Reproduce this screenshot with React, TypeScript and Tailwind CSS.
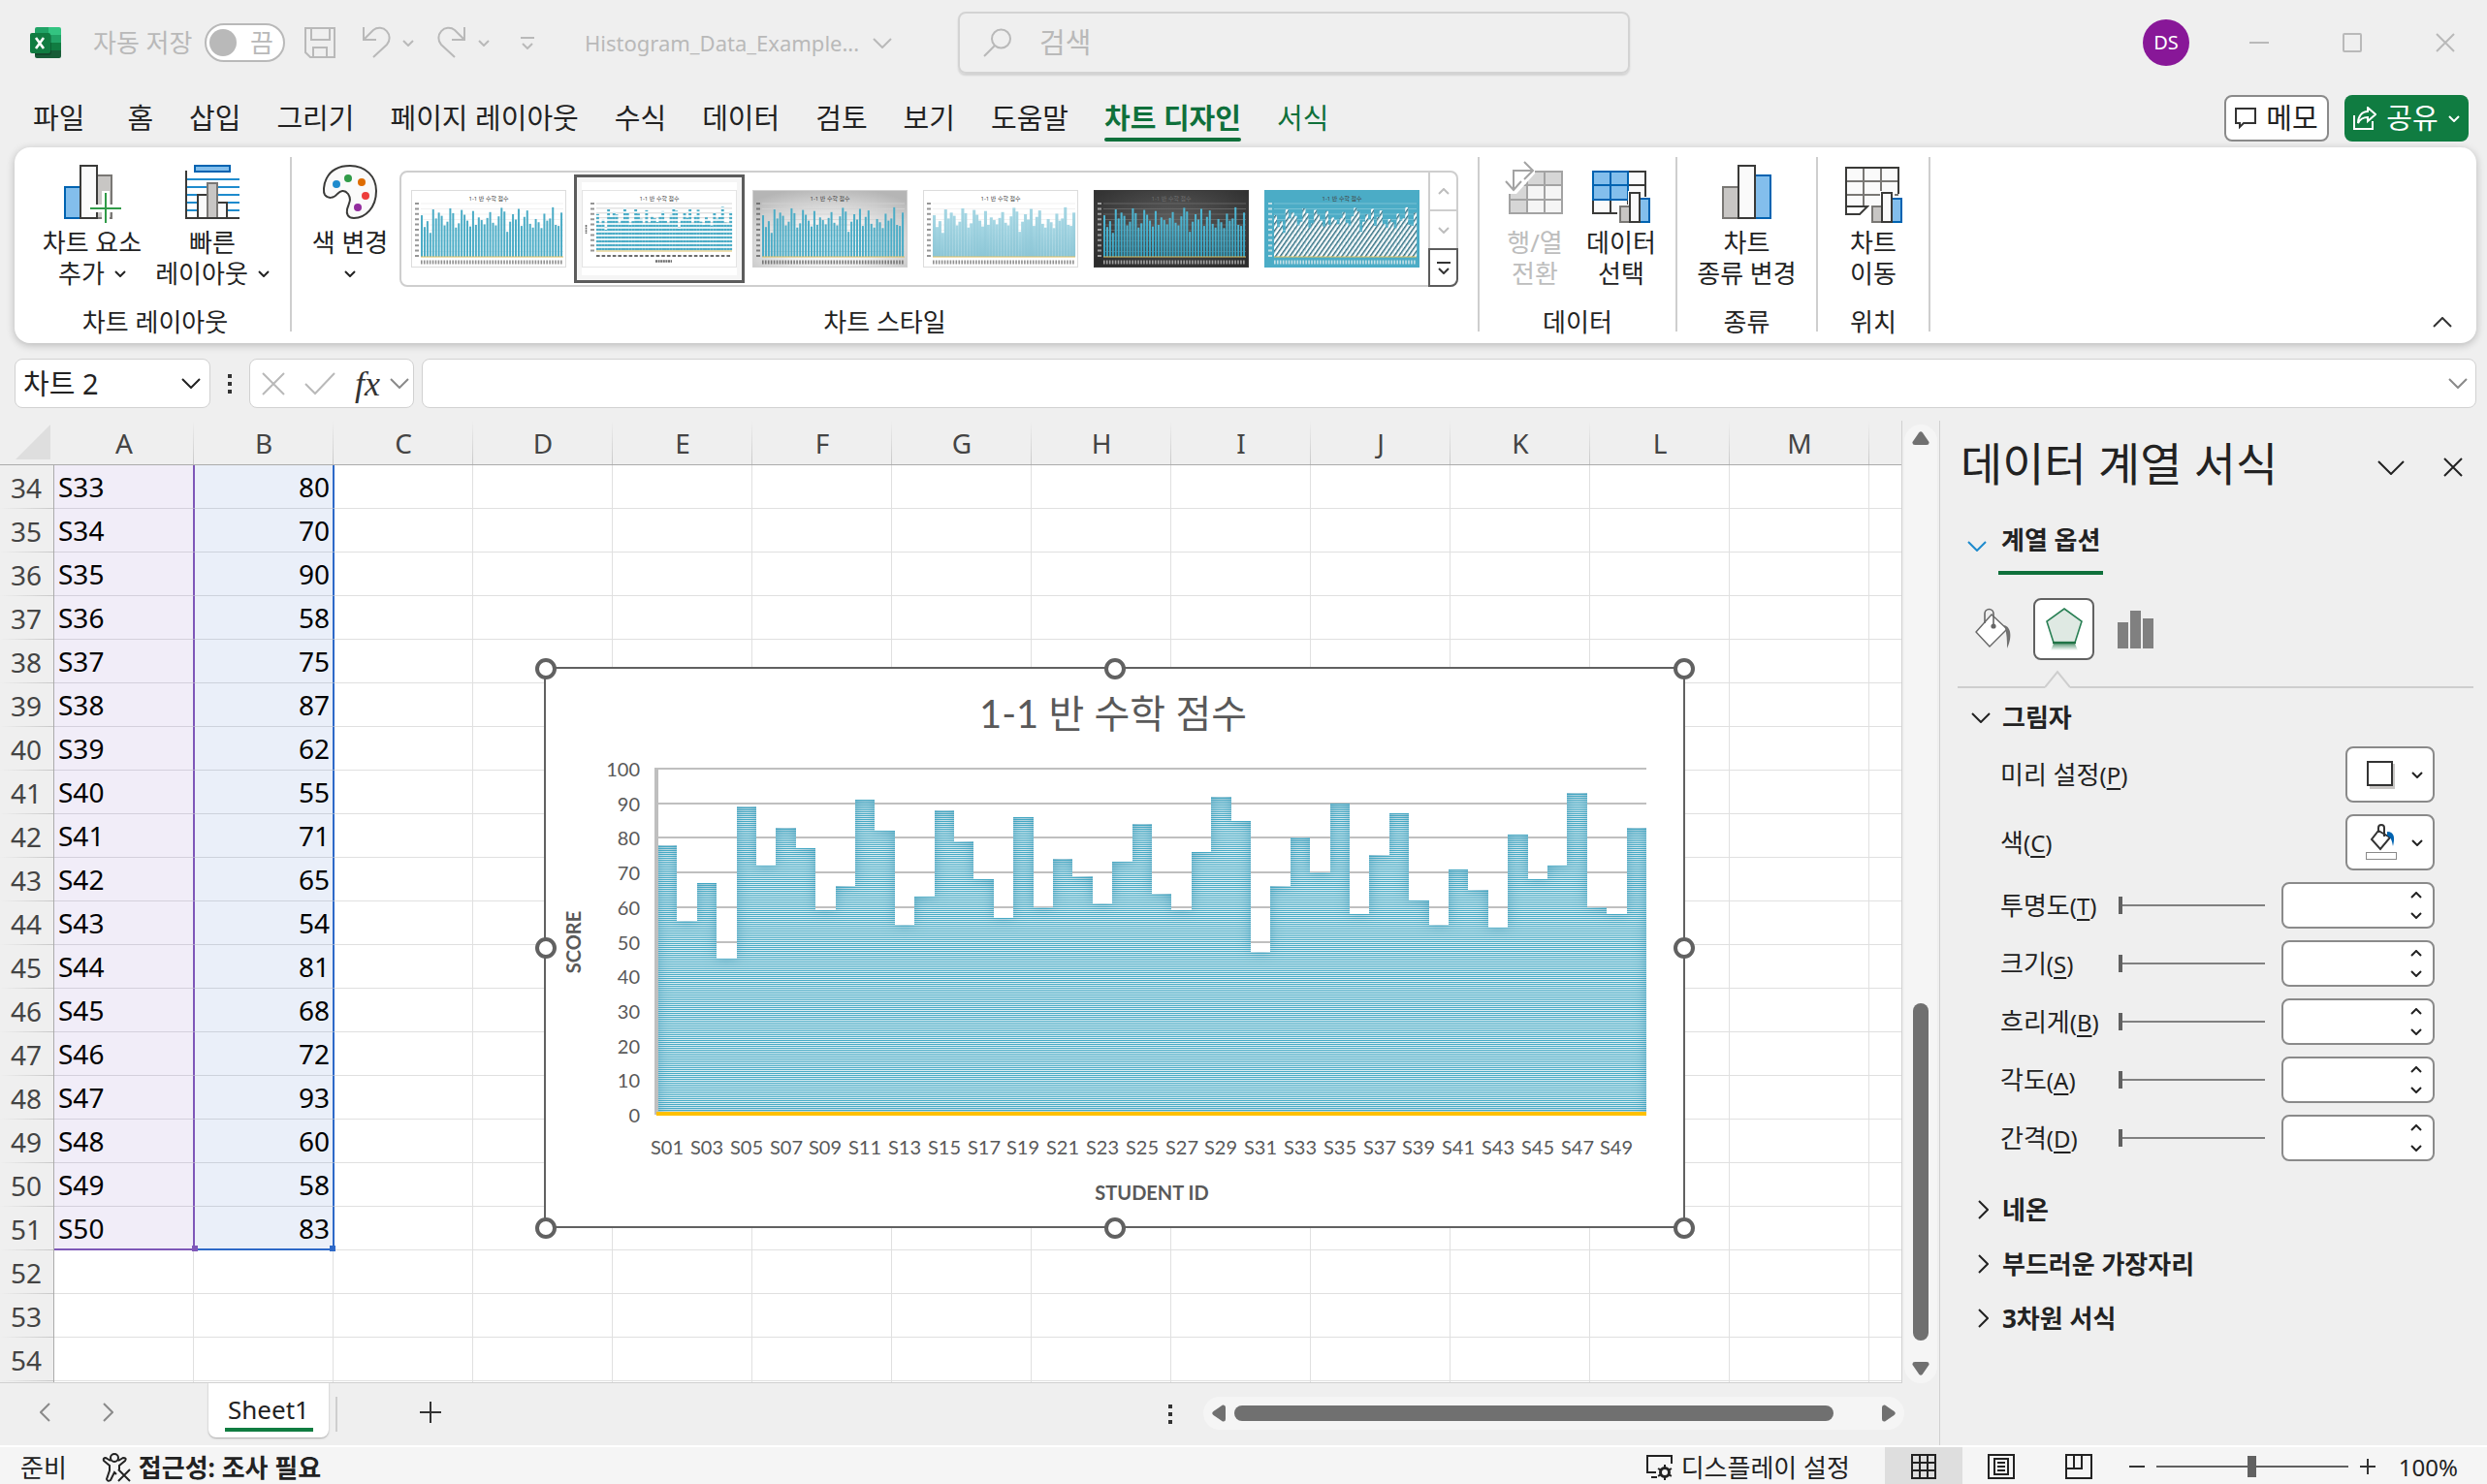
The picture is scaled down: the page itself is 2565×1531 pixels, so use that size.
import { Fragment, useState } from "react";
import type { ReactNode } from "react";

/* DATA */

const SCORES = [
  78, 56, 67, 45, 89, 72, 83, 77, 59, 66, 91, 82, 55, 63, 88, 79, 68, 57, 86, 60, 74, 69, 61, 73, 84,
  64, 59, 76, 92, 85, 47, 66, 80, 70, 90, 58, 75, 87, 62, 55, 71, 65, 54, 81, 68, 72, 93, 60, 58, 83,
];

const COLUMNS = ["A", "B", "C", "D", "E", "F", "G", "H", "I", "J", "K", "L", "M", ""];
const FIRST_ROW = 34;
const LAST_ROW = 54;
const LAST_FILLED_ROW = 51;

const TABS = ["홈", "삽입", "그리기", "페이지 레이아웃", "수식", "데이터", "검토", "보기", "도움말"];

const SHADOW_FIELDS = [
  { id: "transparency", label: "투명도", hotkey: "T" },
  { id: "size", label: "크기", hotkey: "S" },
  { id: "blur", label: "흐리게", hotkey: "B" },
  { id: "angle", label: "각도", hotkey: "A" },
  { id: "distance", label: "간격", hotkey: "D" },
];

function studentId(n: number) {
  return "S" + String(n).padStart(2, "0");
}

/* SMALL ICONS */

type ChevronProps = { size?: number; dir?: "down" | "up" | "left" | "right"; stroke?: number; className?: string };

function Chevron({ size = 12, dir = "down", stroke = 2, className = "" }: ChevronProps) {
  const half = size / 2;
  const points = {
    down: `1,1 ${half},${half} ${size - 1},1`,
    up: `1,${half} ${half},1 ${size - 1},${half}`,
    left: `${half},1 1,${half} ${half},${size - 1}`,
    right: `1,1 ${half},${half} 1,${size - 1}`,
  }[dir];
  const flat = dir === "down" || dir === "up";
  const w = flat ? size : half + 1;
  const h = flat ? half + 1 : size;

  return (
    <svg width={w} height={h} viewBox={`0 0 ${w} ${h}`} className={"shrink-0 " + className} aria-hidden="true">
      <polyline points={points} fill="none" stroke="currentColor" strokeWidth={stroke} />
    </svg>
  );
}

function ExcelLogo() {
  return (
    <svg width="32" height="32" viewBox="0 0 32 32" className="shrink-0" aria-label="Excel">
      <path d="M7 0H19V9H5V2a2 2 0 0 1 2-2z" fill="#21a366" />
      <path d="M19 0H30a2 2 0 0 1 2 2V9H19z" fill="#33c481" />
      <path d="M5 8H19V16H5z" fill="#107c41" />
      <path d="M19 8H32V16H19z" fill="#21a366" />
      <path d="M5 16H19V24H5z" fill="#185c37" />
      <path d="M19 16H32V24H19z" fill="#107c41" />
      <path d="M5 24H32V30a2 2 0 0 1-2 2H7a2 2 0 0 1-2-2z" fill="#185c37" />
      <path d="M5 7H19a3 3 0 0 1 3 3V26a3 3 0 0 1-3 3H5z" fill="#000" opacity="0.2" />
      <rect y="6" width="21" height="21" rx="2" fill="#107c41" />
      <path d="M6 11L14 22M14 11L6 22" stroke="#fff" strokeWidth="2.6" />
    </svg>
  );
}

function SaveIcon() {
  return (
    <svg width="32" height="32" viewBox="0 0 32 32" fill="none" stroke="currentColor" strokeWidth="2">
      <path d="M1 1H31V31H6L1 26z" />
      <path d="M7 1V13H26V1M9 31V21H23V31" />
    </svg>
  );
}

function UndoIcon() {
  return (
    <svg width="30" height="34" viewBox="0 0 30 34" fill="none" stroke="currentColor" strokeWidth="2">
      <path d="M2 1V14H15" />
      <path d="M2 14L12 4A10.300 10.300 0 0 1 26 19L12 32" />
    </svg>
  );
}

function RedoIcon() {
  return (
    <svg width="30" height="34" viewBox="0 0 30 34" fill="none" stroke="currentColor" strokeWidth="2">
      <path d="M28 1V14H15" />
      <path d="M28 14L18 4A10.300 10.300 0 0 0 4 19L18 32" />
    </svg>
  );
}

/* RIBBON ICONS */

function AddElementIcon() {
  return (
    <svg width="60" height="60" viewBox="0 0 60 60" strokeWidth="2">
      <rect x="2" y="23" width="16" height="32" fill="#83beec" stroke="#0063b1" />
      <rect x="34" y="11" width="16" height="44" fill="#c8c6c4" stroke="#797774" />
      <rect x="18" y="1" width="17" height="54" fill="#fafafa" stroke="#3a3a38" />
      <path d="M44 27V60M27 45H60" stroke="#fff" strokeWidth="8" />
      <path d="M44 29V60M28 45H60" stroke="#309b48" />
    </svg>
  );
}

function QuickLayoutIcon() {
  return (
    <svg width="60" height="60" viewBox="0 0 60 60" strokeWidth="2">
      <rect x="12" y="1" width="36" height="6" fill="#83beec" stroke="#0063b1" />
      <path d="M3 15H58M3 23H58M3 31H58M3 39H58M3 47H58" stroke="#1e8bcd" />
      <rect x="15" y="31" width="10" height="24" fill="#fafafa" stroke="#3a3a38" />
      <rect x="35" y="39" width="10" height="16" fill="#fafafa" stroke="#3a3a38" />
      <rect x="25" y="19" width="10" height="36" fill="#c8c6c4" stroke="#797774" />
      <path d="M3 6V55H58" fill="none" stroke="#3a3a38" />
    </svg>
  );
}

function PaletteIcon() {
  return (
    <svg width="60" height="60" viewBox="0 0 60 60">
      <path
        d="M30 1C46 1 57 12 57 27C57 44 46 55 34 55C28 55 26 51 27 46C29 39 32 36 28 30C24 25 20 27 17 30C13 35 7 35 4 31C1 26 3 1 30 1z"
        fill="#fafafa"
        stroke="#3a3a38"
        strokeWidth="2"
      />
      <circle cx="16" cy="20" r="4" fill="#1e8bcd" />
      <circle cx="28" cy="14" r="4" fill="#309b48" />
      <circle cx="42" cy="18" r="4" fill="#de6c00" />
      <circle cx="46" cy="32" r="4" fill="#ed3d3b" />
      <circle cx="38" cy="44" r="4" fill="#922c9e" />
    </svg>
  );
}

function SwapIcon() {
  return (
    <svg width="60" height="60" viewBox="0 0 60 60" fill="none" stroke="#a3a3a3" strokeWidth="2" className="overflow-visible">
      <rect x="4" y="7" width="54" height="43" fill="#f5f5f5" />
      <path d="M4 7H58V21H22V50H4z" fill="#d6d6d6" stroke="none" />
      <path d="M4 7H58V50H4zM22 7V50M40 7V50M4 21H58M4 36H58" />
      <path d="M-3 -6H30V9L11 30H-3z" fill="#fff" stroke="none" />
      <path d="M8 25V6H28M19 -3L28 6L19 15M0 17L8 26L16 17" />
    </svg>
  );
}

function SelectDataIcon() {
  return (
    <svg width="60" height="60" viewBox="0 0 60 60" strokeWidth="2">
      <path d="M1 7H55V50H1zM19 7V50M37 7V50M1 21H55M1 36H55" fill="#fafafa" stroke="#3a3a38" />
      <path d="M1 7H37V36H1zM19 7V36M1 21H37" fill="#83beec" stroke="#0063b1" />
      <path d="M26 41H37V27H52V33H60V60H26z" fill="#fff" />
      <rect x="29" y="43" width="10" height="16" fill="#c8c6c4" stroke="#797774" />
      <rect x="49" y="35" width="10" height="24" fill="#83beec" stroke="#0063b1" />
      <rect x="39" y="29" width="10" height="30" fill="#fafafa" stroke="#3a3a38" />
    </svg>
  );
}

function ChangeTypeIcon() {
  return (
    <svg width="60" height="60" viewBox="0 0 60 60" strokeWidth="2">
      <rect x="5" y="23" width="16" height="32" fill="#c8c6c4" stroke="#797774" />
      <rect x="38" y="11" width="16" height="44" fill="#83beec" stroke="#0063b1" />
      <rect x="21" y="1" width="17" height="54" fill="#fafafa" stroke="#3a3a38" />
    </svg>
  );
}

function MoveChartIcon() {
  return (
    <svg width="60" height="60" viewBox="0 0 60 60" strokeWidth="2">
      <path d="M2 3H56V43H2z" fill="#fafafa" />
      <path d="M20 3V43M38 3V43M2 17H56M2 31H56" stroke="#797774" />
      <path d="M56 30V3H2V51H16L24 43H2" fill="none" stroke="#3a3a38" />
      <path d="M26 41H37V27H52V33H60V60H26z" fill="#fff" />
      <rect x="29" y="43" width="10" height="16" fill="#c8c6c4" stroke="#797774" />
      <rect x="49" y="35" width="10" height="24" fill="#83beec" stroke="#0063b1" />
      <rect x="39" y="29" width="10" height="30" fill="#fafafa" stroke="#3a3a38" />
    </svg>
  );
}

/* CHART STYLE THUMBNAILS */

type ThumbStyle = {
  id: string;
  bg: string;
  bar: string;
  grid: string;
  ink: string;
  border: string;
  gap: number;
  axisTitles?: boolean;
};

const THUMBS: ThumbStyle[] = [
  { id: "s1", bg: "#ffffff", bar: "#4bacc6", grid: "#ececec", ink: "#6b6b6b", border: "#dcdcdc", gap: 1 },
  { id: "s2", bg: "#ffffff", bar: "url(#stripe)", grid: "#c9c9c9", ink: "#6b6b6b", border: "#e4e4e4", gap: 0, axisTitles: true },
  { id: "s3", bg: "url(#silver)", bar: "#4bacc6", grid: "#d2d2d2", ink: "#555555", border: "#d0d0d0", gap: 1 },
  { id: "s4", bg: "#ffffff", bar: "url(#fade)", grid: "#ececec", ink: "#6b6b6b", border: "#dcdcdc", gap: 0 },
  { id: "s5", bg: "url(#night)", bar: "url(#glow)", grid: "#6d6d6d", ink: "#c8c8c8", border: "#3a3a3a", gap: 1 },
  { id: "s6", bg: "#4bacc6", bar: "url(#hatch)", grid: "#84c7d9", ink: "#f2f2f2", border: "#4bacc6", gap: 0 },
];

function ThumbDefs() {
  return (
    <svg width="0" height="0" className="absolute" aria-hidden="true">
      <defs>
        <pattern id="stripe" width="4" height="4" patternUnits="userSpaceOnUse">
          <rect width="4" height="4" fill="#e2f2f6" />
          <rect width="4" height="2" fill="#4bacc6" />
        </pattern>
        <pattern id="hatch" width="4" height="4" patternUnits="userSpaceOnUse" patternTransform="rotate(35)">
          <rect width="4" height="4" fill="#ffffff" />
          <rect width="1.500" height="4" fill="#2f6d80" />
        </pattern>
        <radialGradient id="silver" cx="0.5" cy="0.7" r="0.75">
          <stop offset="0" stopColor="#ffffff" />
          <stop offset="0.4" stopColor="#f1f1f1" />
          <stop offset="1" stopColor="#b5b5b5" />
        </radialGradient>
        <radialGradient id="night" cx="0.5" cy="0.4" r="0.7">
          <stop offset="0" stopColor="#5c5c5c" />
          <stop offset="1" stopColor="#2c2c2c" />
        </radialGradient>
        <linearGradient id="fade" x1="0" y1="0" x2="0" y2="1">
          <stop offset="0" stopColor="#a5d6e3" />
          <stop offset="1" stopColor="#8cc6d6" />
        </linearGradient>
        <linearGradient id="glow" x1="0" y1="0" x2="0" y2="1">
          <stop offset="0" stopColor="#4fb9d6" />
          <stop offset="1" stopColor="#37a0be" />
        </linearGradient>
      </defs>
    </svg>
  );
}

function Thumb({ style }: { style: ThumbStyle }) {
  const left = style.axisTitles ? 15 : 10;
  const right = style.axisTitles ? 155 : 157;
  const bottom = style.axisTitles ? 63 : 69;
  const top = 14;
  const step = (right - left) / SCORES.length;
  const unit = (bottom - top) / 100;

  return (
    <svg width="160" height="80" viewBox="0 0 160 80" aria-hidden="true">
      <rect x="0.500" y="0.500" width="159" height="79" fill={style.bg} stroke={style.border} />
      <text x="80" y="11" textAnchor="middle" fontSize="6" fill={style.id === "s5" ? "#707070" : "#444444"}>
        1-1 반 수학 점수
      </text>
      {[0, 1, 2, 3, 4, 5, 6, 7, 8, 9].map((k) => (
        <path key={k} d={`M${left} ${top + (k * (bottom - top)) / 10}H${right}`} stroke={style.grid} strokeWidth="0.800" />
      ))}
      <path d={`M${left - 4} ${top - 1}V${bottom + 1}`} stroke={style.ink} strokeWidth="4" strokeDasharray="2 3.400" opacity="0.700" />
      {SCORES.map((s, i) => (
        <rect
          key={i}
          x={left + i * step}
          y={bottom - s * unit}
          width={style.gap ? step * 0.68 : step + 0.1}
          height={s * unit}
          fill={style.bar}
        />
      ))}
      <path d={`M${left} ${bottom}H${right}`} stroke="#e0c060" />
      {style.axisTitles ? (
        <g stroke={style.ink}>
          <path d={`M${left} 68H${right}`} strokeWidth="2" strokeDasharray="3.600 2" />
          <path d="M76 73.500H93" strokeWidth="2.400" strokeDasharray="2 0.600" />
          <path d="M4.500 36V45" strokeWidth="1.600" strokeDasharray="2 0.600" />
        </g>
      ) : (
        <path d={`M${left} 74.500H${right}`} stroke={style.ink} strokeWidth="4" strokeDasharray="1.600 1.340" opacity="0.750" />
      )}
    </svg>
  );
}

/* RIBBON */

function RibbonButton({
  icon,
  line1,
  line2,
  chevron,
  className,
  disabled,
}: {
  icon: ReactNode;
  line1: string;
  line2?: string;
  chevron?: boolean;
  className: string;
  disabled?: boolean;
}) {
  return (
    <button
      disabled={disabled}
      className={"flex flex-col items-center text-[26px] leading-8 whitespace-nowrap disabled:text-[#bdbdbd] " + className}
    >
      <span className="mb-1">{icon}</span>
      <span>{line1}</span>
      <span className="flex h-8 items-center gap-2.5">
        {line2}
        {chevron && <Chevron />}
      </span>
    </button>
  );
}

function RibbonGroup({ label, className, children }: { label: string; className: string; children: ReactNode }) {
  return (
    <>
      <section className={"flex shrink-0 flex-col " + className}>
        <div className="flex h-[164px] items-start pt-[18px]">{children}</div>
        <h2 className="text-center text-[26px] leading-8">{label}</h2>
      </section>
      <div className="mt-2.5 h-[180px] w-[2px] shrink-0 bg-[#cecece]" />
    </>
  );
}

function Ribbon() {
  const [selected, setSelected] = useState("s2");

  return (
    <div className="mr-[11px] ml-[15px] flex h-[202px] rounded-2xl bg-white shadow-[0_2px_8px_rgba(0,0,0,0.24)]">
      <RibbonGroup label="차트 레이아웃" className="w-[284px] pl-1.5">
        <div className="flex pl-3">
          <RibbonButton className="w-[124px]" icon={<AddElementIcon />} line1="차트 요소" line2="추가" chevron />
          <RibbonButton className="w-[124px]" icon={<QuickLayoutIcon />} line1="빠른" line2="레이아웃" chevron />
        </div>
      </RibbonGroup>

      <RibbonGroup label="차트 스타일" className="w-[1223px]">
        <RibbonButton className="ml-4 w-[88px]" icon={<PaletteIcon />} line1="색 변경" chevron />
        <ThumbDefs />
        <div className="mt-[6px] ml-[7px] flex h-[120px] rounded-lg border-2 border-[#cecece]">
          <div className="flex w-[1059px] items-center pl-[2px]">
            {THUMBS.map((t) => (
              <button
                key={t.id}
                aria-label={"스타일 " + t.id}
                onClick={() => setSelected(t.id)}
                className={
                  "flex h-[112px] w-[176px] shrink-0 items-center justify-center border-[3px] " +
                  (selected === t.id ? "border-[#5c5c5c] bg-[#f5f5f5]" : "border-transparent")
                }
              >
                <span className={"py-2 " + (selected === t.id ? "bg-white" : "")}>
                  <Thumb style={t} />
                </span>
              </button>
            ))}
          </div>
          <div className="flex w-[29px] flex-col border-l-2 border-[#cecece] text-[#bdbdbd]">
            <button aria-label="위로" className="flex flex-1 items-center justify-center border-b-2 border-[#cecece]">
              <Chevron dir="up" />
            </button>
            <button aria-label="아래로" className="flex flex-1 items-center justify-center">
              <Chevron />
            </button>
            <button
              aria-label="자세히"
              className="-mr-[2px] -mb-[2px] -ml-[2px] flex h-[40px] flex-col items-center justify-center gap-1 rounded-br-lg border-2 border-[#5c5c5c] text-[#333333]"
            >
              <span className="h-[2px] w-3.5 bg-[#333333]" />
              <Chevron />
            </button>
          </div>
        </div>
      </RibbonGroup>

      <RibbonGroup label="데이터" className="w-[202px]">
        <RibbonButton className="ml-3 w-[90px]" icon={<SwapIcon />} line1="행/열" line2="전환" disabled />
        <RibbonButton className="w-[88px]" icon={<SelectDataIcon />} line1="데이터" line2="선택" />
      </RibbonGroup>

      <RibbonGroup label="종류" className="w-[143px]">
        <RibbonButton className="w-full" icon={<ChangeTypeIcon />} line1="차트" line2="종류 변경" />
      </RibbonGroup>

      <RibbonGroup label="위치" className="w-[114px]">
        <RibbonButton className="w-full" icon={<MoveChartIcon />} line1="차트" line2="이동" />
      </RibbonGroup>

      <button aria-label="리본 축소" className="mt-auto mr-[25px] mb-4 ml-auto text-[#333333]">
        <Chevron dir="up" size={20} />
      </button>
    </div>
  );
}

/* TITLE BAR + TABS */

function TitleBar() {
  const [autoSave, setAutoSave] = useState(false);

  return (
    <header className="flex h-[88px] items-center pr-[33px] pl-[31px] text-[26px] text-[#b9b9b9]">
      <div className="flex w-[957px] items-center">
        <ExcelLogo />
        <span className="ml-[33px] w-[115px] whitespace-nowrap">자동 저장</span>
        <button
          role="switch"
          aria-checked={autoSave}
          aria-label="자동 저장"
          onClick={() => setAutoSave(!autoSave)}
          className="flex h-10 w-[83px] items-center justify-between rounded-full border-2 border-[#b9b9b9] bg-white pr-2.5 pl-[3px]"
        >
          <span className="size-7 rounded-full bg-[#b9b9b9]" />
          <span>끔</span>
        </button>
        <button aria-label="저장" className="ml-5">
          <SaveIcon />
        </button>
        <button aria-label="실행 취소" className="ml-[27px] flex items-center gap-3">
          <UndoIcon />
          <Chevron />
        </button>
        <button aria-label="다시 실행" className="ml-6 flex items-center gap-3">
          <RedoIcon />
          <Chevron />
        </button>
        <button aria-label="빠른 실행 도구 모음" className="ml-8 flex flex-col items-center gap-1">
          <span className="h-[2px] w-3.5 bg-[#b9b9b9]" />
          <Chevron />
        </button>
        <button className="ml-[52px] flex items-center gap-3.5 text-[22px]">
          Histogram_Data_Example...
          <Chevron size={20} />
        </button>
      </div>

      <label className="flex h-16 w-[693px] items-center gap-7 rounded-lg border-2 border-[#d3d3d3] px-6 shadow-[0_2px_2px_rgba(0,0,0,0.12)]">
        <svg width="30" height="30" viewBox="0 0 30 30" fill="none" stroke="currentColor" strokeWidth="2">
          <circle cx="18.500" cy="11" r="9.500" />
          <path d="M12 18L1 29" />
        </svg>
        <input
          aria-label="검색"
          placeholder="검색"
          className="min-w-0 flex-1 bg-transparent text-[29px] outline-none placeholder:text-[#b9b9b9]"
        />
      </label>

      <div className="ml-auto flex items-center">
        <button className="mr-[62px] flex size-12 items-center justify-center rounded-full bg-[#881798] text-[20px] text-white">
          DS
        </button>
        <button aria-label="최소화" className="mr-[76px] h-[2px] w-5 bg-[#b9b9b9]" />
        <button aria-label="최대화" className="mr-[76px] size-5 rounded-xs border-2 border-[#b9b9b9]" />
        <button aria-label="닫기">
          <svg width="20" height="20" viewBox="0 0 20 20" stroke="currentColor" strokeWidth="2">
            <path d="M1 1L19 19M19 1L1 19" />
          </svg>
        </button>
      </div>
    </header>
  );
}

function TabBar() {
  return (
    <nav className="flex h-16 items-center pt-1 pr-[19px] pl-[34px] text-[29px] leading-9 whitespace-nowrap">
      <button className="mr-11">파일</button>
      <div className="flex items-center gap-[37px]">
        {TABS.map((t) => (
          <button key={t}>{t}</button>
        ))}
        <button className="relative font-bold text-[#0f703b]">
          차트 디자인
          <span className="absolute -bottom-1.5 left-0 h-1 w-full rounded-full bg-[#0f703b]" />
        </button>
        <button className="text-[#0f703b]">서식</button>
      </div>
      <button className="ml-auto flex h-12 w-[108px] items-center justify-center gap-2.5 rounded-lg border-2 border-[#8a8a8a] bg-white">
        <svg width="22" height="22" viewBox="0 0 22 22" fill="none" stroke="#333333" strokeWidth="2">
          <path d="M1 1H21V16H9L5 20V16H1z" />
        </svg>
        메모
      </button>
      <button className="ml-4 flex h-12 w-32 items-center justify-center gap-2.5 rounded-lg bg-[#107c41] text-white">
        <svg width="24" height="24" viewBox="0 0 24 24" fill="none" stroke="currentColor" strokeWidth="2">
          <path d="M1 9V23H20V15" />
          <path d="M15 1L23 8L15 15V11C10 11 7 13 5 17C5 10 9 5 15 5z" />
        </svg>
        공유
        <Chevron />
      </button>
    </nav>
  );
}

/* FORMULA BAR */

function FormulaBar() {
  return (
    <div className="mt-4 flex h-[51px] items-stretch pr-[11px] pl-[15px]">
      <div className="flex w-[202px] items-center rounded-lg border border-[#d1d1d1] bg-white pr-[9px] pl-2">
        <input aria-label="이름 상자" defaultValue="차트 2" className="min-w-0 flex-1 bg-transparent text-[29px] leading-9 outline-none" />
        <button aria-label="이름 목록">
          <Chevron size={20} />
        </button>
      </div>
      <div className="flex w-10 flex-col items-center justify-center gap-1">
        <span className="size-1 bg-[#333333]" />
        <span className="size-1 bg-[#333333]" />
        <span className="size-1 bg-[#333333]" />
      </div>
      <div className="flex w-[170px] items-center rounded-lg border border-[#d1d1d1] bg-white pr-1 pl-3 text-[#b9b9b9]">
        <button aria-label="취소">
          <svg width="24" height="24" viewBox="0 0 24 24" stroke="currentColor" strokeWidth="2">
            <path d="M1 1L23 23M23 1L1 23" />
          </svg>
        </button>
        <button aria-label="입력" className="ml-5">
          <svg width="32" height="24" viewBox="0 0 32 24" fill="none" stroke="currentColor" strokeWidth="2">
            <path d="M1 12L11 22L31 1" />
          </svg>
        </button>
        <button
          aria-label="함수 삽입"
          className="ml-5 font-['Liberation_Serif',serif] text-[36px] leading-9 text-[#333333] italic"
        >
          fx
        </button>
        <Chevron size={20} className="ml-auto text-[#8a8a8a]" />
      </div>
      <div className="ml-2 flex flex-1 items-center rounded-lg border border-[#d1d1d1] bg-white pr-2 pl-3">
        <input aria-label="수식 입력줄" className="min-w-0 flex-1 bg-transparent text-[29px] outline-none" />
        <Chevron size={20} className="text-[#8a8a8a]" />
      </div>
    </div>
  );
}

/* CHART OBJECT */

const PLOT = { left: 116, right: 1136, top: 104, bottom: 461 };

function ScoreChart() {
  const step = (PLOT.right - PLOT.left) / SCORES.length;
  const unit = (PLOT.bottom - PLOT.top) / 100;
  const area =
    `M${PLOT.left} ${PLOT.bottom}` +
    SCORES.map((s, i) => `V${Math.round(PLOT.bottom - s * unit)}H${Math.round(PLOT.left + (i + 1) * step)}`).join("") +
    `V${PLOT.bottom}z`;

  return (
    <svg width="1197" height="600" viewBox="-11 -11 1197 600" role="img" aria-label="1-1 반 수학 점수">
      <defs>
        <pattern id="bars" width="2" height="2" patternUnits="userSpaceOnUse">
          <rect width="2" height="2" fill="#dbeef3" />
          <rect width="2" height="1" fill="#4bacc6" />
        </pattern>
        <filter id="inner" x="-2%" y="-5%" width="104%" height="110%">
          <feComponentTransfer in="SourceAlpha" result="inverse">
            <feFuncA type="table" tableValues="1 0" />
          </feComponentTransfer>
          <feGaussianBlur in="inverse" stdDeviation="7" result="soft" />
          <feFlood floodColor="#3fa3bf" floodOpacity="1" />
          <feComposite in2="soft" operator="in" />
          <feComposite in2="SourceAlpha" operator="in" result="shade" />
          <feMerge>
            <feMergeNode in="SourceGraphic" />
            <feMergeNode in="shade" />
          </feMerge>
        </filter>
      </defs>

      <rect x="0" y="0" width="1175" height="577" fill="#ffffff" stroke="#616161" strokeWidth="2" />
      <text x="586" y="62" textAnchor="middle" fontSize="40" fill="#595959" className="font-['Lato','Noto_Sans_CJK_KR',sans-serif]">
        1-1 반 수학 점수
      </text>

      {[0, 1, 2, 3, 4, 5, 6, 7, 8, 9, 10].map((k) => {
        const y = Math.round(PLOT.bottom - k * 10 * unit);
        return (
          <Fragment key={k}>
            <path d={`M${PLOT.left} ${y}H${PLOT.right}`} stroke="#bfbfbf" strokeWidth="2" />
            <text x="98" y={y + 8} textAnchor="end" fontSize="20" fill="#595959" className="font-['Lato',sans-serif]">
              {k * 10}
            </text>
          </Fragment>
        );
      })}

      <path d={area} fill="url(#bars)" filter="url(#inner)" />
      <path d={`M${PLOT.left - 1} ${PLOT.top - 1}V${PLOT.bottom}`} stroke="#bfbfbf" strokeWidth="4" />
      <path d={`M${PLOT.left - 1} ${PLOT.bottom - 1}H${PLOT.right}`} stroke="#ffc000" strokeWidth="4" />

      <g textAnchor="middle" fontSize="20" fill="#595959" className="font-['Lato',sans-serif]">
        {SCORES.map((_, i) =>
          i % 2 === 0 ? (
            <text key={i} x={Math.round(PLOT.left + (i + 0.5) * step)} y="502">
              {studentId(i + 1)}
            </text>
          ) : null,
        )}
        <text x="626" y="549" fontWeight="bold">
          STUDENT ID
        </text>
        <text transform="translate(37 283) rotate(-90)" fontWeight="bold">
          SCORE
        </text>
      </g>

      <g fill="#ffffff" stroke="#616161" strokeWidth="4">
        {[1, 588, 1175].map((x) =>
          [1, 289, 578].map((y) => (x === 588 && y === 289 ? null : <circle key={x + "-" + y} cx={x} cy={y} r="9" />)),
        )}
      </g>
    </svg>
  );
}

/* SHEET */

function cellClass(row: number, col: string) {
  const last = row === LAST_FILLED_ROW;
  if (row > LAST_FILLED_ROW) return "border-r border-b border-[#e0e0e0] p-0";
  if (col === "A") {
    return (
      "border-r border-r-[#7e57b8] bg-[#f1edf8] p-0 pl-1 " +
      (last ? "border-b-2 border-b-[#7e57b8]" : "border-b border-b-[#d4d0dc]")
    );
  }
  if (col === "B") {
    return (
      "relative border-x border-l-[#7e57b8] border-r-[#2e69c8] bg-[#eaeff9] p-0 pr-[3px] text-right " +
      (last ? "border-b-2 border-b-[#2e69c8]" : "border-b border-b-[#cdd2dc]")
    );
  }
  if (col === "C") return "border-x border-b border-[#e0e0e0] border-l-[#2e69c8] p-0";
  return "border-r border-b border-[#e0e0e0] p-0";
}

function cellValue(row: number, col: string) {
  if (row > LAST_FILLED_ROW) return null;
  if (col === "A") return studentId(row - 1);
  if (col === "B") return SCORES[row - 2];
  return null;
}

function Sheet() {
  const rows = Array.from({ length: LAST_ROW - FIRST_ROW + 2 }, (_, i) => FIRST_ROW + i);

  return (
    <div className="relative min-h-0 min-w-0 flex-1 overflow-hidden border-r border-b border-[#d0d0d0] bg-white">
      <table className="w-[2072px] table-fixed border-separate border-spacing-0 text-[28px] leading-10 text-black">
        <colgroup>
          <col className="w-14" />
          {COLUMNS.map((c) => (
            <col key={c} className="w-36" />
          ))}
        </colgroup>
        <thead>
          <tr className="h-[46px] bg-[#efefef] text-[#444444]">
            <th className="border-b border-[#ababab] p-0 pb-1 align-bottom">
              <svg width="38" height="38" viewBox="0 0 38 38" className="mr-[3px] ml-auto" aria-label="모두 선택">
                <path d="M37 1V37H1z" fill="#dedede" />
              </svg>
            </th>
            {COLUMNS.map((c) => (
              <th key={c} className="relative border-b border-[#ababab] p-0 font-normal">
                {c}
                <span className="absolute right-0 bottom-0 h-full w-px bg-linear-to-b from-transparent to-[#c8c8c8]" />
              </th>
            ))}
          </tr>
        </thead>
        <tbody>
          {rows.map((r) => (
            <tr key={r} className="h-[45px]">
              <th className="relative border-r border-[#ababab] bg-[#efefef] p-0 pr-3 text-right font-normal text-[#444444]">
                {r <= LAST_ROW && r}
                <span className="absolute bottom-0 left-0 h-px w-full bg-linear-to-r from-transparent to-[#c8c8c8]" />
              </th>
              {COLUMNS.map((c) => (
                <td key={c} className={cellClass(r, c)}>
                  {cellValue(r, c)}
                  {r === LAST_FILLED_ROW && c === "B" && (
                    <>
                      <span className="absolute -bottom-[3px] -left-[3px] size-[6px] bg-[#7e57b8]" />
                      <span className="absolute -right-[3px] -bottom-[3px] size-[6px] bg-[#2e69c8]" />
                    </>
                  )}
                </td>
              ))}
            </tr>
          ))}
        </tbody>
      </table>

      <div className="absolute top-[244px] left-[551px]">
        <ScoreChart />
      </div>
    </div>
  );
}

function VerticalScroll() {
  return (
    <div className="mt-1 mr-[2px] ml-[2px] flex w-[34px] flex-col items-center rounded-full bg-[#f5f5f5] pt-[7px] pb-2">
      <button aria-label="위로 스크롤">
        <svg width="18" height="14" viewBox="0 0 18 14" fill="#707070">
          <path d="M7 1.500Q9 -1 11 1.500L17.500 11Q18 14 15 14H3Q0 14 0.500 11z" />
        </svg>
      </button>
      <div className="flex w-4 flex-1 flex-col pt-[576px] pb-[22px]">
        <div className="flex-1 rounded-full bg-[#707070]" />
      </div>
      <button aria-label="아래로 스크롤">
        <svg width="18" height="14" viewBox="0 0 18 14" fill="#707070">
          <path d="M7 12.500Q9 15 11 12.500L17.500 3Q18 0 15 0H3Q0 0 0.500 3z" />
        </svg>
      </button>
    </div>
  );
}

function SheetTabs() {
  return (
    <div className="flex h-16 shrink-0 items-start pr-[36px]">
      <button aria-label="이전 시트" className="mt-5 ml-[41px] text-[#8a8a8a]">
        <Chevron dir="left" size={20} />
      </button>
      <button aria-label="다음 시트" className="mt-5 ml-[54px] text-[#8a8a8a]">
        <Chevron dir="right" size={20} />
      </button>
      <button className="-mt-px ml-[98px] flex h-[57px] w-[124px] flex-col items-center rounded-b-lg bg-white pt-2 text-[26px] leading-10 shadow-[0_1px_2px_rgba(0,0,0,0.3)]">
        Sheet1
        <span className="-mt-px h-1 w-[91px] bg-[#107c41]" />
      </button>
      <span className="mt-3.5 ml-[7px] h-9 w-[2px] bg-[#cecece]" />
      <button aria-label="새 시트" className="mt-[19px] ml-[85px]">
        <svg width="22" height="22" viewBox="0 0 22 22" stroke="#333333" strokeWidth="2">
          <path d="M11 0V22M0 11H22" />
        </svg>
      </button>
      <div className="mt-[22px] ml-auto flex flex-col gap-1">
        <span className="size-1 bg-[#333333]" />
        <span className="size-1 bg-[#333333]" />
        <span className="size-1 bg-[#333333]" />
      </div>
      <div className="mt-3.5 ml-8 flex h-[34px] w-[723px] items-center rounded-full bg-[#f5f5f5] px-[9px]">
        <button aria-label="왼쪽으로 스크롤">
          <svg width="14" height="18" viewBox="0 0 14 18" fill="#707070">
            <path d="M1.500 7Q-1 9 1.500 11L11 17.500Q14 18 14 15V3Q14 0 11 0.500z" />
          </svg>
        </button>
        <div className="ml-[9px] h-4 w-[618px] rounded-full bg-[#707070]" />
        <button aria-label="오른쪽으로 스크롤" className="ml-auto">
          <svg width="14" height="18" viewBox="0 0 14 18" fill="#707070">
            <path d="M12.500 7Q15 9 12.500 11L3 17.500Q0 18 0 15V3Q0 0 3 0.500z" />
          </svg>
        </button>
      </div>
    </div>
  );
}

/* FORMAT PANE */

function Hotkey({ letter }: { letter: string }) {
  return (
    <span className="text-[24px]">
      (<u className="underline-offset-4">{letter}</u>)
    </span>
  );
}

function FormatPane() {
  return (
    <aside className="flex w-[565px] shrink-0 flex-col border-l border-[#d0d0d0] text-[26px] leading-8">
      <div className="flex items-center pt-3.5 pr-[25px] pl-[21px]">
        <h1 className="text-[47px] leading-[60px] whitespace-nowrap">데이터 계열 서식</h1>
        <button aria-label="작업창 옵션" className="mt-2 ml-auto">
          <Chevron size={28} />
        </button>
        <button aria-label="닫기" className="mt-2 ml-10">
          <svg width="20" height="20" viewBox="0 0 20 20" stroke="#222222" strokeWidth="2">
            <path d="M1 1L19 19M19 1L1 19" />
          </svg>
        </button>
      </div>

      <button className="mt-[33px] flex items-start pl-7 font-bold">
        <Chevron size={20} className="mt-[17px] mr-3 text-[#1e8bcd]" />
        <span className="border-b-4 border-[#0f703b] px-[3px] pb-4">계열 옵션</span>
      </button>

      <div className="mt-6 flex items-center pl-[36px]">
        <button aria-label="채우기 및 선">
          <svg width="38" height="44" viewBox="0 0 38 44" fill="none" stroke="#666666">
            <path d="M17 7L33 22L15 40L1 25z" fill="#ffffff" strokeWidth="1.400" />
            <path d="M10 16V6a4.500 4.500 0 0 1 9 0V18" strokeWidth="1.600" />
            <circle cx="19" cy="19" r="2.600" fill="#666666" stroke="none" />
            <path d="M30 18C38 20 38 32 33 42C33 34 33 26 30 18z" fill="#707070" stroke="none" />
          </svg>
        </button>
        <button
          aria-label="효과"
          className="ml-[22px] flex h-16 w-[63px] items-center justify-center rounded-lg border-2 border-[#616161] bg-white"
        >
          <svg width="40" height="46" viewBox="0 0 40 46">
            <defs>
              <linearGradient id="mirror" x1="0" y1="0" x2="0" y2="1">
                <stop offset="0" stopColor="#217346" stopOpacity="0.700" />
                <stop offset="1" stopColor="#217346" stopOpacity="0" />
              </linearGradient>
            </defs>
            <path d="M9 38H31L34 45H6z" fill="url(#mirror)" />
            <path d="M20 2L38 15L31 37H9L2 15z" fill="#dfe9e3" stroke="#2a8055" strokeWidth="1.600" />
            <path d="M8 37H32" stroke="#217346" strokeWidth="2.400" />
          </svg>
        </button>
        <button aria-label="계열 옵션" className="ml-6">
          <svg width="38" height="40" viewBox="0 0 38 40" fill="#808080">
            <path d="M0 13H11V40H0zM13 1H24V40H13zM26 9H37V40H26z" />
          </svg>
        </button>
      </div>

      <div className="mt-2.5 mr-3.5 ml-[18px] flex items-end">
        <span className="h-[2px] w-[90px] bg-[#cecece]" />
        <svg width="26" height="19" viewBox="0 0 26 19" fill="none" stroke="#cecece" strokeWidth="2">
          <path d="M0 18L13 2L26 18" />
        </svg>
        <span className="h-[2px] flex-1 bg-[#cecece]" />
      </div>

      <button className="mt-3.5 flex items-center pl-8 font-bold">
        <Chevron size={20} className="mr-3" />
        그림자
      </button>

      <div className="mt-3.5 flex flex-col gap-3 pr-[54px] pl-[62px]">
        <div className="flex h-[58px] items-center justify-between">
          <span>
            미리 설정
            <Hotkey letter="P" />
          </span>
          <button aria-label="미리 설정" className="flex h-[58px] w-[92px] items-center justify-end gap-[17px] rounded-lg border-2 border-[#8a8a8a] bg-white pr-2.5">
            <svg width="29" height="29" viewBox="0 0 29 29">
              <rect x="3" y="3" width="26" height="26" fill="#c8c6c4" />
              <rect x="1" y="1" width="25" height="24" fill="#ffffff" stroke="#333333" strokeWidth="2" />
            </svg>
            <Chevron />
          </button>
        </div>
        <div className="flex h-[58px] items-center justify-between">
          <span>
            색<Hotkey letter="C" />
          </span>
          <button aria-label="색" className="flex h-[58px] w-[92px] items-center justify-end gap-[15px] rounded-lg border-2 border-[#8a8a8a] bg-white pr-2.5">
            <svg width="32" height="38" viewBox="0 0 32 38" fill="none">
              <path d="M13 7L25 14L15 26L6 16L13 7z" stroke="#333333" strokeWidth="2" />
              <path d="M13 9V4a3 3 0 0 1 6 0V13" stroke="#333333" strokeWidth="2" />
              <path d="M22 8C30 8 30 15 28 23C27 17 26 14 22 12z" fill="#0063b1" />
              <rect x="0.500" y="29.500" width="31" height="7" fill="#ffffff" stroke="#8a8a8a" />
            </svg>
            <Chevron />
          </button>
        </div>
        {SHADOW_FIELDS.map((f) => (
          <div key={f.id} className="flex h-12 items-center">
            <label htmlFor={f.id} className="w-[122px] whitespace-nowrap">
              {f.label}
              <Hotkey letter={f.hotkey} />
            </label>
            <input
              type="range"
              aria-label={f.label}
              min={0}
              max={100}
              defaultValue={0}
              className="h-6 w-[151px] appearance-none bg-transparent [&::-webkit-slider-runnable-track]:h-[2px] [&::-webkit-slider-runnable-track]:bg-[#808080] [&::-webkit-slider-thumb]:-mt-2 [&::-webkit-slider-thumb]:h-[18px] [&::-webkit-slider-thumb]:w-1 [&::-webkit-slider-thumb]:appearance-none [&::-webkit-slider-thumb]:bg-[#616161]"
            />
            <div className="ml-auto flex h-12 w-[158px] rounded-lg border-2 border-[#8a8a8a] bg-white">
              <input id={f.id} className="min-w-0 flex-1 bg-transparent pl-2 outline-none" />
              <div className="flex w-[34px] flex-col items-center justify-between py-2">
                <button aria-label={f.label + " 늘리기"} className="flex">
                  <Chevron dir="up" />
                </button>
                <button aria-label={f.label + " 줄이기"} className="flex">
                  <Chevron />
                </button>
              </div>
            </div>
          </div>
        ))}
      </div>

      <div className="mt-[34px] flex flex-col items-start gap-6 pl-[39px] font-bold">
        {["네온", "부드러운 가장자리", "3차원 서식"].map((name) => (
          <button key={name} className="flex items-center gap-3.5">
            <Chevron dir="right" size={20} />
            {name}
          </button>
        ))}
      </div>
    </aside>
  );
}

/* STATUS BAR */

function StatusBar() {
  return (
    <footer className="flex h-10 shrink-0 items-stretch border-t-2 border-white bg-[#f5f5f5] pr-[30px] pl-[21px] text-[26px] leading-8 whitespace-nowrap">
      <div className="flex items-center pt-1">
        <span>준비</span>
        <button className="ml-9 flex items-center gap-2 font-bold">
          <svg width="30" height="30" viewBox="0 0 30 30" fill="none" stroke="#222222" strokeWidth="2">
            <circle cx="13" cy="5" r="4" />
            <path d="M9 8L4 5Q1 5 2 8L8 13V18L5 27Q6 30 9 28L13 20L15 22M17 8L22 5Q26 5 24 8L18 13V17" />
            <path d="M17 17L29 29M29 17L17 29" />
          </svg>
          접근성: 조사 필요
        </button>
      </div>
      <button className="ml-auto flex items-center gap-2 pt-1">
        <svg width="28" height="28" viewBox="0 0 28 28" fill="none" stroke="#222222" strokeWidth="2">
          <path d="M10 19H1V2H26V10M5 24H11" />
          <circle cx="19" cy="19" r="4.500" strokeWidth="3" />
          <path d="M19 11V27M12 15L26 23M26 15L12 23" strokeDasharray="3 10 3" />
        </svg>
        디스플레이 설정
      </button>
      <button aria-label="기본" className="ml-9 flex w-20 items-center justify-center bg-[#dedede] pt-0.5">
        <svg width="26" height="26" viewBox="0 0 26 26" fill="none" stroke="#222222" strokeWidth="2">
          <path d="M1 1H25V25H1zM9 1V25M17 1V25M1 9H25M1 17H25" />
        </svg>
      </button>
      <div className="flex items-center pt-0.5">
        <button aria-label="페이지 레이아웃" className="ml-[26px]">
          <svg width="28" height="26" viewBox="0 0 28 26" fill="none" stroke="#222222" strokeWidth="2">
            <path d="M1 1H27V25H1zM7 5H21V21H7zM10 9H18M10 13H18M10 17H18" />
          </svg>
        </button>
        <button aria-label="페이지 나누기 미리 보기" className="ml-[52px]">
          <svg width="28" height="26" viewBox="0 0 28 26" fill="none" stroke="#222222" strokeWidth="2">
            <path d="M1 1H27V25H1zM1 15H17V1M9 1V15" />
          </svg>
        </button>
        <button aria-label="축소" className="ml-[38px] h-[2px] w-4 bg-[#333333]" />
        <input
          type="range"
          aria-label="확대/축소"
          min={0}
          max={100}
          defaultValue={50}
          className="ml-3 h-6 w-[198px] appearance-none bg-transparent [&::-webkit-slider-runnable-track]:h-[2px] [&::-webkit-slider-runnable-track]:bg-[#616161] [&::-webkit-slider-thumb]:-mt-2.5 [&::-webkit-slider-thumb]:h-[22px] [&::-webkit-slider-thumb]:w-[9px] [&::-webkit-slider-thumb]:appearance-none [&::-webkit-slider-thumb]:bg-[#616161]"
        />
        <button aria-label="확대" className="ml-3">
          <svg width="16" height="16" viewBox="0 0 16 16" stroke="#333333" strokeWidth="2">
            <path d="M8 0V16M0 8H16" />
          </svg>
        </button>
        <span className="ml-6 pt-0.5 text-[24px]">100%</span>
      </div>
    </footer>
  );
}

export default function App() {
  return (
    <div className="flex h-screen w-full flex-col overflow-hidden bg-[#efefef] font-['Noto_Sans','Noto_Sans_CJK_KR',sans-serif] text-[#222222]">
      <TitleBar />
      <TabBar />
      <Ribbon />
      <FormulaBar />
      <main className="mt-[13px] flex min-h-0 flex-1">
        <div className="flex min-w-0 flex-1 flex-col">
          <div className="flex min-h-0 flex-1">
            <Sheet />
            <VerticalScroll />
          </div>
          <SheetTabs />
        </div>
        <FormatPane />
      </main>
      <StatusBar />
    </div>
  );
}
